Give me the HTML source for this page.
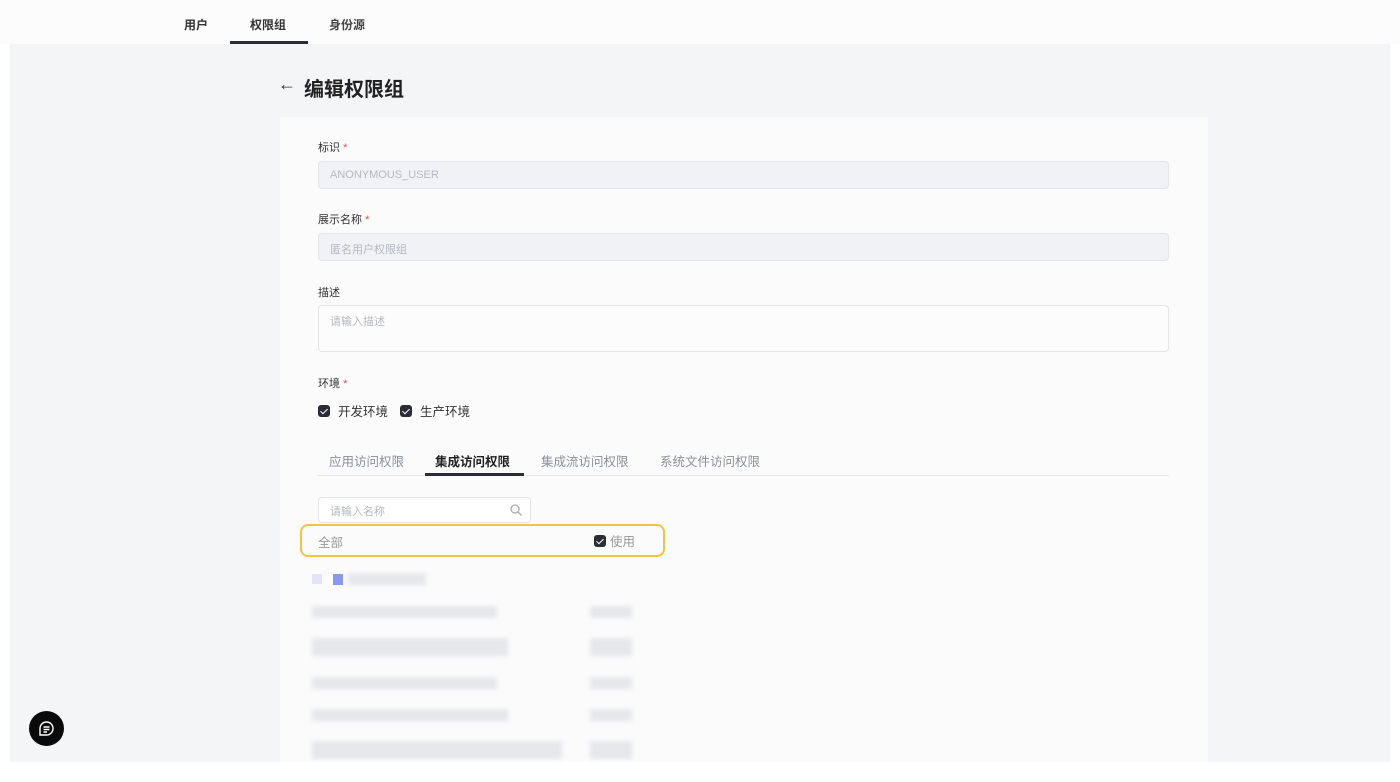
<!DOCTYPE html>
<html><head><meta charset="utf-8"><style>
*{box-sizing:border-box;margin:0;padding:0}
body{width:1400px;height:782px;background:#fff;font-family:"Liberation Sans","Noto Sans CJK SC",sans-serif;position:relative;overflow:hidden;color:#1f2329}
.nav{position:absolute;left:0;top:0;width:1400px;height:44px;background:#fcfcfc}
.nav span{position:absolute;top:16px;font-size:12px;color:#333;font-weight:600}
.bg{position:absolute;left:10px;top:44px;width:1380px;height:718px;background:#f4f5f7}
.card{position:absolute;left:280px;top:117px;width:928px;height:645px;background:#fbfbfc}
.lbl{position:absolute;left:318px;font-size:11px;color:#333}
.lbl i{color:#e5484d;font-style:normal}
.inp{position:absolute;left:318px;width:851px;height:28px;border:1px solid #e3e5e9;border-radius:4px;background:#f1f2f5;font-size:11px;color:#b4b8bf;padding:7px 11px}
.cb{position:absolute;width:12px;height:12px;background:#2a2d33;border-radius:3px}
.cb:after{content:"";position:absolute;left:3.5px;top:1.5px;width:3px;height:6px;border:solid #fff;border-width:0 1.5px 1.5px 0;transform:rotate(45deg)}
.t{position:absolute;font-size:12.5px;color:#333}
.tab{position:absolute;top:451px;font-size:12.5px;color:#8a8f98}
.bar{position:absolute;background:#e6e7ea;filter:blur(2px);height:12px}
</style></head><body>
<div class="nav">
<span style="left:184px">用户</span>
<span style="left:250px">权限组</span>
<span style="left:329px;color:#444">身份源</span>
<div style="position:absolute;left:230px;top:41px;width:78px;height:3px;background:#2a2d33"></div>
</div>
<div class="bg"></div>
<div style="position:absolute;left:278px;top:74px;font-size:18px;color:#333">←</div>
<div style="position:absolute;left:304px;top:73px;font-size:20px;font-weight:700;color:#222">编辑权限组</div>
<div class="card"></div>
<div class="lbl" style="top:139px">标识 <i>*</i></div>
<div class="inp" style="top:161px">ANONYMOUS_USER</div>
<div class="lbl" style="top:211px">展示名称 <i>*</i></div>
<div class="inp" style="top:233px">匿名用户权限组</div>
<div class="lbl" style="top:284px">描述</div>
<div class="inp" style="top:305px;height:47px;background:#fcfcfd">请输入描述</div>
<div class="lbl" style="top:375px">环境 <i>*</i></div>
<div class="cb" style="left:318px;top:405px"></div><div class="t" style="left:338px;top:401px">开发环境</div>
<div class="cb" style="left:400px;top:405px"></div><div class="t" style="left:420px;top:401px">生产环境</div>
<div style="position:absolute;left:318px;top:475px;width:851px;height:1px;background:#e8e9ec"></div>
<div class="tab" style="left:329px">应用访问权限</div>
<div class="tab" style="left:435px;color:#222;font-weight:700">集成访问权限</div>
<div style="position:absolute;left:425px;top:473px;width:99px;height:3px;background:#2a2d33"></div>
<div class="tab" style="left:541px">集成流访问权限</div>
<div class="tab" style="left:660px">系统文件访问权限</div>
<div style="position:absolute;left:318px;top:497px;width:213px;height:26px;border:1px solid #e3e5e9;border-radius:4px;background:#fff;font-size:11px;color:#b4b8bf;padding:5px 11px">请输入名称
<svg style="position:absolute;right:8px;top:6px" width="12" height="12" viewBox="0 0 12 12" fill="none" stroke="#aaa" stroke-width="1.3"><circle cx="5" cy="5" r="4"/><path d="M8 8l3.5 3.5"/></svg></div>
<div style="position:absolute;left:300px;top:524px;width:365px;height:33px;border:2px solid #f5c242;border-radius:8px"></div>
<div class="t" style="left:318px;top:532px;color:#999">全部</div>
<div class="cb" style="left:594px;top:535px"></div><div class="t" style="left:610px;top:531px;color:#999">使用</div>
<div style="position:absolute;left:312px;top:574px;width:10px;height:10px;background:#e3e4f5"></div>
<div style="position:absolute;left:333px;top:574px;width:10px;height:11px;background:#8c97ee"></div>
<div class="bar" style="left:348px;top:573px;width:78px"></div>
<div class="bar" style="left:312px;top:606px;width:185px"></div><div class="bar" style="left:590px;top:606px;width:42px"></div>
<div class="bar" style="left:312px;top:638px;width:196px;height:18px"></div><div class="bar" style="left:590px;top:638px;width:42px;height:18px"></div>
<div class="bar" style="left:312px;top:677px;width:185px"></div><div class="bar" style="left:590px;top:677px;width:42px"></div>
<div class="bar" style="left:312px;top:709px;width:196px"></div><div class="bar" style="left:590px;top:709px;width:42px"></div>
<div class="bar" style="left:312px;top:741px;width:250px;height:18px"></div><div class="bar" style="left:590px;top:741px;width:42px;height:18px"></div>
<div style="position:absolute;left:29px;top:711px;width:35px;height:35px;border-radius:50%;background:#0a0a0a"></div>
<svg style="position:absolute;left:38px;top:720px" width="17" height="17" viewBox="0 0 17 17" fill="none" stroke="#fff" stroke-width="1.4"><path d="M8.5 2a6.5 6.5 0 1 1 0 13H2V8.5A6.5 6.5 0 0 1 8.5 2z"/><path d="M5.5 7h6M5.5 9.5h6M5.5 12h3.5"/></svg>
</body></html>
